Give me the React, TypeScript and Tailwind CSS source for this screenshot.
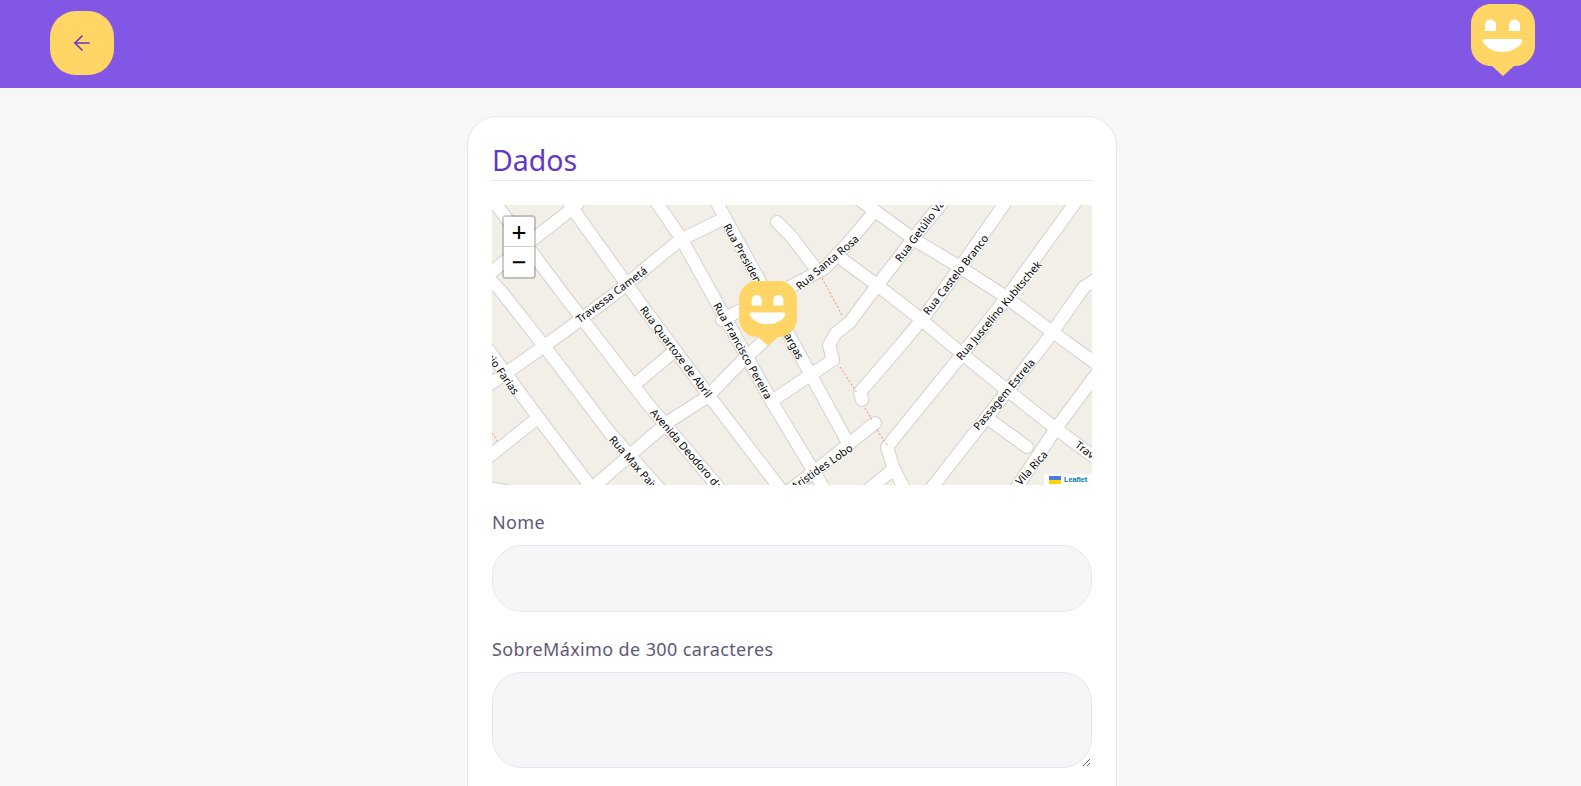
import { ArrowLeft } from "lucide-react";

// Roads traced from the tile, in page coordinates (viewBox matches the map's place on the page).
const roads = [
  "495,203 560,290 647,403 725,495",
  "570,205 643,307 710,397 785,495",
  "486,275 500,290 545,347 610,433 665,495",
  "485,345 540,420 597,495",
  "486,387 543,347 580,320 620,290 647,267 680,240 723,219",
  "485,277 568,212 578,203",
  "657,203 681,238 717,303 772,402 825,490",
  "717,203 848,443",
  "590,490 668,422 707,397 743,360 765,340",
  "722,320 735,313 790,287 825,268 848,243 875,211",
  "777,222 790,235 817,270",
  "773,400 833,360 829,345 836,333 850,322 876,287 920,230 942,203",
  "860,200 875,211 918,242 955,264 1003,295 1047,328 1098,365",
  "843,260 877,285 918,317 967,358 1007,390 1055,428 1098,460",
  "1005,203 963,263 927,313 905,340 868,383 860,392 862,400",
  "1075,203 1007,297 960,357 887,447 893,467 905,490",
  "930,490 1047,340 1077,297 1084,287 1098,278",
  "1015,490 1057,427 1098,372",
  "990,420 1027,447",
  "790,490 825,463 875,423",
  "868,490 890,472",
  "640,380 672,353",
  "485,460 535,420",
  "485,487 525,495",
];

const paths = [
  "822,278 843,317",
  "840,367 857,393",
  "865,408 872,420",
  "877,430 887,445",
  "492,433 498,442",
];

type MapLabel = { text: string; x: number; y: number; angle: number; anchor?: "end" };

const labels: MapLabel[] = [
  { text: "Rua Presidente Getúlio Vargas", x: 727, y: 224, angle: 61 },
  { text: "Rua Santa Rosa", x: 797, y: 287, angle: -40 },
  { text: "Rua Getúlio Vargas", x: 897, y: 260, angle: -53 },
  { text: "Rua Castelo Branco", x: 925, y: 313, angle: -52 },
  { text: "Rua Juscelino Kubitschek", x: 958, y: 358, angle: -50 },
  { text: "Travessa Cametá", x: 577, y: 320, angle: -37 },
  { text: "Rua Quartoze de Abril", x: 643, y: 307, angle: 53 },
  { text: "Rua Francisco Pereira", x: 717, y: 303, angle: 61 },
  { text: "Rua Sérgio Farias", x: 517, y: 393, angle: 55, anchor: "end" },
  { text: "Rua Max Paiva", x: 612, y: 437, angle: 49 },
  { text: "Avenida Deodoro da Fonseca", x: 653, y: 410, angle: 49 },
  { text: "Rua Aristides Lobo", x: 851, y: 446, angle: -35, anchor: "end" },
  { text: "Passagem Estrela", x: 975, y: 428, angle: -50 },
  { text: "Rua Vila Rica", x: 1045, y: 452, angle: -48, anchor: "end" },
  { text: "Travessa", x: 1077, y: 443, angle: 37 },
];

function Logo({ className }: { className: string }) {
  return (
    <svg viewBox="0 0 64 72" className={className}>
      <path
        d="M20 0H44C55 0 64 9 64 20V42C64 53 55 62 44 62H43L32 72L21 62H20C9 62 0 53 0 42V20C0 9 9 0 20 0Z"
        fill="#FFD666"
      />
      <path d="M14 27V21C14 18 16.500 15.500 19.500 15.500S25 18 25 21V27Z" fill="#fff" />
      <path d="M38 27V21C38 18 40.500 15.500 43.500 15.500S49 18 49 21V27Z" fill="#fff" />
      <path
        d="M14 35H49C51 35 51.800 36.500 51 38C48 44 40 48 31.500 48S15 44 12 38C11.200 36.500 12 35 14 35Z"
        fill="#fff"
      />
    </svg>
  );
}

function MapView() {
  return (
    <div className="relative h-[280px] overflow-hidden bg-[#f2efe9]">
      <svg viewBox="492 205 600 280" className="block h-full w-full">
        <g fill="none" strokeLinecap="round" strokeLinejoin="round">
          {roads.map((points) => (
            <polyline key={points} points={points} stroke="#d4d1cb" strokeWidth={14} />
          ))}
          {roads.map((points) => (
            <polyline key={points} points={points} stroke="#ffffff" strokeWidth={12} />
          ))}
          {paths.map((points) => (
            <polyline
              key={points}
              points={points}
              stroke="#fa8072"
              strokeWidth={1}
              strokeDasharray="2 2"
              strokeLinecap="butt"
            />
          ))}
        </g>
        <g className="font-['Noto_Sans',sans-serif] text-[10.800px]" fill="#000">
          {labels.map((label) => (
            <text
              key={label.text}
              transform={`translate(${label.x} ${label.y}) rotate(${label.angle})`}
              dominantBaseline="central"
              textAnchor={label.anchor}
              stroke="#fff"
              strokeWidth={2}
              paintOrder="stroke"
            >
              {label.text}
            </text>
          ))}
        </g>
      </svg>

      <Logo className="absolute left-[247px] top-[76px] h-[65px] w-[58px]" />

      <div className="absolute left-[10px] top-[10px] rounded-[4px] border-2 border-black/20 bg-clip-padding font-['DejaVu_Sans_Mono',monospace] text-[24px] text-black">
        <div className="flex h-[30px] w-[30px] items-center justify-center rounded-t-[2px] border-b border-[#ccc] bg-white">
          +
        </div>
        <div className="flex h-[30px] w-[30px] items-center justify-center rounded-b-[2px] bg-white">
          −
        </div>
      </div>

      <div className="absolute bottom-0 right-0 flex h-[11px] w-[48px] items-center bg-white/80 pl-[5px] font-['Liberation_Sans',sans-serif] text-[7.200px] font-bold leading-none text-[#0078a8]">
        <span className="mr-[3px] flex h-[8px] w-[12px] flex-col">
          <span className="h-1/2 bg-[#4c7be1]" />
          <span className="h-1/2 bg-[#ffd500]" />
        </span>
        Leaflet
      </div>
    </div>
  );
}

export default function App() {
  const labelClasses =
    "mt-[24px] mb-[10px] block text-[18px] leading-[26px] tracking-[0.38px] text-[#5f5877]";
  const fieldClasses = "block w-full rounded-[30px] border border-[#e6e6f3] bg-[#f6f6f7]";

  return (
    <div className="h-[786px] overflow-hidden bg-[#f7f7f7] font-['Noto_Sans',sans-serif]">
      <header className="flex h-[88px] items-start justify-between bg-[#8257e5] pl-[50px] pr-[46px]">
        <button className="mt-[11px] flex h-[64px] w-[64px] items-center justify-center rounded-[26px] bg-[#ffd666] text-[#6438c4]">
          <ArrowLeft size={24} strokeWidth={1.6} />
        </button>
        <Logo className="mt-[4px] h-[72px] w-[64px]" />
      </header>

      <main className="flex justify-center pl-[3px] pt-[28px]">
        <form className="h-[900px] w-[650px] rounded-[30px] border border-[#e6e6f0] bg-white px-[24px] pt-[24px]">
          <h2 className="border-b border-[#e6e6f0] pb-[1px] text-[28.500px] leading-[38px] text-[#6438c4]">
            Dados
          </h2>

          <div className="mt-[24px]">
            <MapView />
          </div>

          <label className={labelClasses}>Nome</label>
          <input type="text" className={`${fieldClasses} h-[67px]`} />

          <label className={labelClasses}>SobreMáximo de 300 caracteres</label>
          <textarea className={`${fieldClasses} h-[96px]`} />
        </form>
      </main>
    </div>
  );
}
